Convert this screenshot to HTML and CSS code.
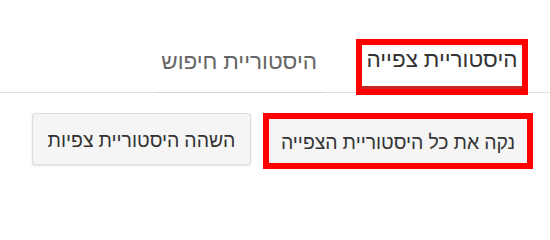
FILE: index.html
```html
<!DOCTYPE html>
<html lang="he" dir="rtl">
<head>
<meta charset="utf-8">
<link rel="stylesheet" href="styles.css">
</head>
<body>
<div class="tabs">
  <div class="tab active"><span class="tab-inner">היסטוריית צפייה</span></div>
  <div class="tab">היסטוריית חיפוש</div>
</div>
<div class="actions">
  <button class="btn btn-marked">נקה את כל היסטוריית הצפייה</button>
  <button class="btn">השהה היסטוריית צפיות</button>
</div>
</body>
</html>
```
FILE: styles.css
```css
html, body {
  margin: 0;
  padding: 0;
  background: #fff;
}
body {
  width: 550px;
  height: 200px;
  overflow: hidden;
  font-family: "Noto Sans", sans-serif;
  color: #333;
}
.tabs {
  display: flex;
  align-items: flex-end;
  height: 92px;
  border-bottom: 1px solid #e2e2e2;
  padding-right: 22px;
  gap: 33px;
}
.tab {
  font-size: 22.5px;
  line-height: 28px;
  color: #666;
  padding: 0 6px 17px;
  border-bottom: 1px solid #d4d4d4;
  margin-bottom: -1px;
  white-space: nowrap;
}
.tab.active {
  border: 6px solid #ff0000;
  padding: 0;
  margin-bottom: -3px;
  width: 160px;
  color: #333;
}
.tab-inner {
  display: block;
  height: 44px;
  box-sizing: border-box;
  padding-top: 0;
  text-align: center;
  border-bottom: 3px solid #c42828;
}
.actions {
  display: flex;
  align-items: flex-start;
  gap: 12px;
  padding: 20px 17px 0 0;
}
.btn {
  font-family: inherit;
  font-size: 19.4px;
  color: #333;
  background: #f5f5f5;
  border: 1px solid #dcdcdc;
  border-radius: 3px;
  box-shadow: 0 1px 2px rgba(0,0,0,0.12);
  height: 52px;
  width: 219px;
  padding: 0;
  margin: 0;
  white-space: nowrap;
}
.btn-marked {
  border: 6px solid #ff0000;
  border-radius: 0;
  box-shadow: none;
  height: 56px;
  width: 270px;
}
```
